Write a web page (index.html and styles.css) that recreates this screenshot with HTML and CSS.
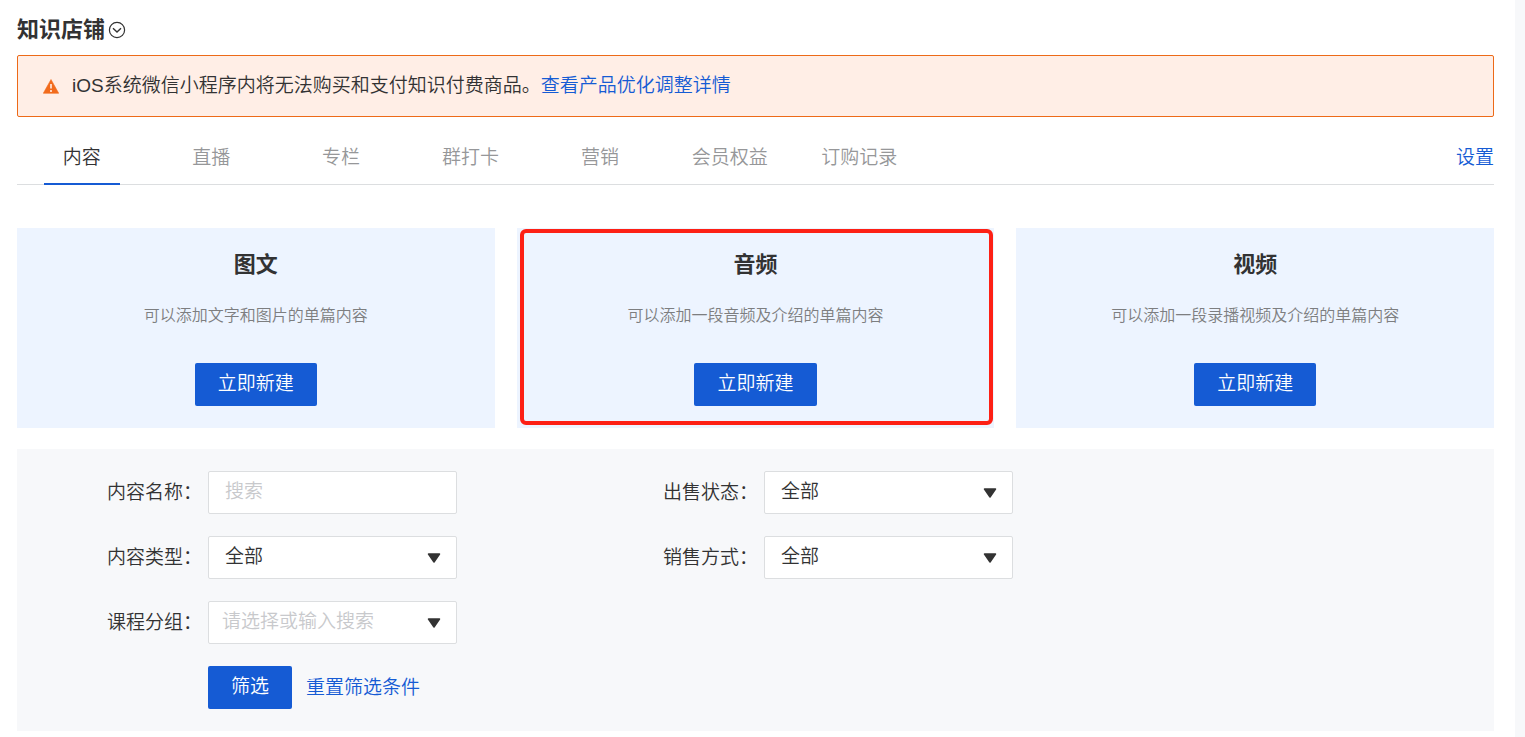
FILE: index.html
```html
<!DOCTYPE html>
<html lang="zh-CN">
<head>
<meta charset="utf-8">
<title>知识店铺</title>
<link rel="stylesheet" href="styles.css">
</head>
<body>
<main class="page">
  <header class="page-head">
    <h1 class="page-title">知识店铺</h1>
    <button class="title-toggle" type="button" aria-label="展开">
      <svg width="18" height="18" viewBox="0 0 18 18" fill="none" stroke="#333" stroke-width="1.2"><circle cx="9" cy="9" r="7.600"/><path d="M5 7.200 9 11l4-3.800" stroke-width="1.400"/></svg>
    </button>
  </header>

  <div class="alert" role="alert">
    <svg class="alert-icon" width="16" height="15" viewBox="0 0 16 15"><path d="M8 .5 15.700 14.300H.3z" fill="#f26b1d" stroke="#f26b1d" stroke-width=".6" stroke-linejoin="round"/><path d="M8 5v4.500M8 11v2" stroke="#ffeee6" stroke-width="1.600"/></svg>
    <p class="alert-text">iOS系统微信小程序内将无法购买和支付知识付费商品。<a class="link" href="#">查看产品优化调整详情</a></p>
  </div>

  <div class="tabbar">
    <nav class="tabs">
      <a class="tab tab-active" href="#">内容</a>
      <a class="tab" href="#">直播</a>
      <a class="tab" href="#">专栏</a>
      <a class="tab" href="#">群打卡</a>
      <a class="tab" href="#">营销</a>
      <a class="tab" href="#">会员权益</a>
      <a class="tab" href="#">订购记录</a>
    </nav>
    <a class="link settings" href="#">设置</a>
  </div>

  <section class="cards">
    <article class="card">
      <h2 class="card-title">图文</h2>
      <p class="card-desc">可以添加文字和图片的单篇内容</p>
      <button class="btn" type="button">立即新建</button>
    </article>
    <article class="card card-marked">
      <h2 class="card-title">音频</h2>
      <p class="card-desc">可以添加一段音频及介绍的单篇内容</p>
      <button class="btn" type="button">立即新建</button>
    </article>
    <article class="card">
      <h2 class="card-title">视频</h2>
      <p class="card-desc">可以添加一段录播视频及介绍的单篇内容</p>
      <button class="btn" type="button">立即新建</button>
    </article>
  </section>

  <form class="filters">
    <div class="field">
      <label class="label" for="name">内容名称：</label>
      <input class="control" id="name" type="text" placeholder="搜索">
    </div>
    <div class="field">
      <label class="label" for="status">出售状态：</label>
      <div class="picker">
        <select class="control" id="status"><option>全部</option></select>
        <svg class="arrow" width="14" height="10" viewBox="0 0 14 10"><path d="M1.500 1h11L7 9z" fill="#333" stroke="#333" stroke-width="1.500" stroke-linejoin="round"/></svg>
      </div>
    </div>
    <div class="field">
      <label class="label" for="type">内容类型：</label>
      <div class="picker">
        <select class="control" id="type"><option>全部</option></select>
        <svg class="arrow" width="14" height="10" viewBox="0 0 14 10"><path d="M1.500 1h11L7 9z" fill="#333" stroke="#333" stroke-width="1.500" stroke-linejoin="round"/></svg>
      </div>
    </div>
    <div class="field">
      <label class="label" for="method">销售方式：</label>
      <div class="picker">
        <select class="control" id="method"><option>全部</option></select>
        <svg class="arrow" width="14" height="10" viewBox="0 0 14 10"><path d="M1.500 1h11L7 9z" fill="#333" stroke="#333" stroke-width="1.500" stroke-linejoin="round"/></svg>
      </div>
    </div>
    <div class="field field-wide">
      <label class="label" for="group">课程分组：</label>
      <div class="picker">
        <input class="control control-combo" id="group" type="text" placeholder="请选择或输入搜索">
        <svg class="arrow" width="14" height="10" viewBox="0 0 14 10"><path d="M1.500 1h11L7 9z" fill="#333" stroke="#333" stroke-width="1.500" stroke-linejoin="round"/></svg>
      </div>
    </div>
    <div class="actions">
      <button class="btn" type="button">筛选</button>
      <a class="link" href="#">重置筛选条件</a>
    </div>
  </form>
</main>
</body>
</html>
```
FILE: styles.css
```css
* {
  box-sizing: border-box;
}

body {
  margin: 0;
  padding-right: 10px;
  background: #f7f8fa;
  color: #323233;
  font: 350 19px/28px "Liberation Sans", "Noto Sans CJK SC", sans-serif;
}

h1, h2, p {
  margin: 0;
}

.page {
  min-height: 100vh;
  padding: 14px 21px 6px 17px;
  background: #fff;
}

.link {
  color: #155bd4;
  text-decoration: none;
}

.page-head {
  display: flex;
  align-items: center;
  gap: 3px;
  height: 32px;
}

.page-title {
  font-size: 22px;
  font-weight: 700;
  line-height: 32px;
}

.title-toggle {
  display: flex;
  padding: 0;
  border: 0;
  background: none;
}

.alert {
  display: flex;
  align-items: center;
  gap: 13px;
  margin-top: 9px;
  padding: 16px 25px;
  border: 1px solid #ed6a18;
  border-radius: 2px;
  background: #ffeee6;
}

.alert-icon {
  flex: none;
}

.tabbar {
  display: flex;
  justify-content: space-between;
  height: 68px;
  border-bottom: 1px solid #dcdee0;
}

.tabs {
  display: grid;
  grid-template-columns: repeat(7, 1fr);
  flex: 0 1 907px;
  justify-items: center;
}

.tab {
  width: 76px;
  height: 68px;
  padding-top: 27px;
  color: #969799;
  text-align: center;
  text-decoration: none;
  white-space: nowrap;
}

.tab-active {
  border-bottom: 2px solid #155bd4;
  color: #323233;
}

.settings {
  padding-top: 27px;
}

.cards {
  display: grid;
  grid-template-columns: repeat(3, 1fr);
  gap: 22px;
  margin-top: 43px;
}

.card {
  position: relative;
  display: flex;
  flex-direction: column;
  align-items: center;
  padding: 21px 16px 22px;
  background: #edf4ff;
}

.card-marked::after {
  content: "";
  position: absolute;
  inset: 1px 1px 3px 3px;
  border: 4px solid #fd2015;
  border-radius: 6px;
  pointer-events: none;
}

.card-title {
  font-size: 22px;
  font-weight: 700;
  line-height: 32px;
}

.card-desc {
  margin: 23px 0 35px;
  color: #7d7e80;
  font-size: 16px;
  line-height: 24px;
}

.btn {
  height: 43px;
  padding: 0 23px 1px;
  border: 0;
  border-radius: 2px;
  background: #155bd4;
  color: #fff;
  font: inherit;
}

.filters {
  display: grid;
  grid-template-columns: repeat(2, 350px);
  gap: 22px 206px;
  margin-top: 21px;
  padding: 22px 90px;
  background: #f7f8fa;
}

.field {
  display: flex;
  align-items: center;
  gap: 6px;
}

.field-wide {
  grid-column: 1 / -1;
  width: 350px;
}

.label {
  flex: none;
}

.picker {
  position: relative;
  flex: 1;
}

.control {
  flex: 1;
  width: 100%;
  min-width: 0;
  height: 43px;
  padding: 0 16px 1px;
  border: 1px solid #dcdee0;
  border-radius: 2px;
  background: #fff;
  color: #323233;
  font: inherit;
  appearance: none;
}

.control-combo {
  padding-left: 13px;
}

.control::placeholder {
  color: #c8c9cc;
}

.arrow {
  position: absolute;
  top: 17px;
  right: 16px;
  pointer-events: none;
}

.actions {
  display: flex;
  grid-column: 1 / -1;
  align-items: center;
  gap: 14px;
  padding-left: 101px;
}
```
